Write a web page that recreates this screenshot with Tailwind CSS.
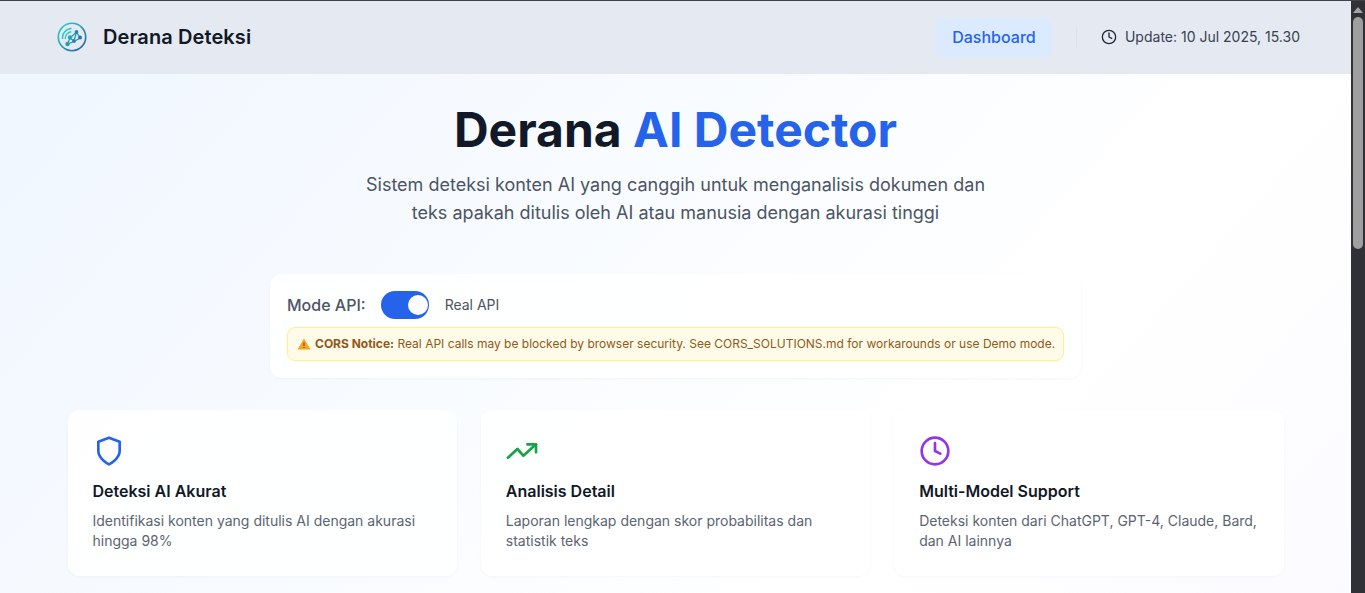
<!DOCTYPE html>
<html lang="id">
<head>
  <meta charset="UTF-8" />
  <meta name="viewport" content="width=device-width, initial-scale=1.0" />
  <title>Derana AI Detector</title>
  <script src="https://cdn.jsdelivr.net/npm/@tailwindcss/browser@4"></script>
</head>
<body class="h-screen overflow-hidden flex font-['Inter',sans-serif] text-gray-900">
  <div class="flex-1 min-w-0 h-full overflow-hidden">
    <div class="min-h-[1520px] flex flex-col bg-gradient-to-br from-[#eff6ff] via-white to-[#f5f3ff]">
      <!-- header -->
      <header class="shrink-0 h-[74px] border-t border-[#3f4248] pb-[1px] bg-[#e5e9f1] flex items-center justify-between pl-[57px] pr-[51px]">
        <div class="flex items-center gap-4">
          <svg class="w-[30px] h-[30px]" viewBox="0 0 30 30" fill="none">
            <defs>
              <linearGradient id="logoGrad" x1="3" y1="3" x2="27" y2="27" gradientUnits="userSpaceOnUse">
                <stop offset="0" stop-color="#22d3c5" />
                <stop offset="1" stop-color="#2563a8" />
              </linearGradient>
            </defs>
            <circle cx="15" cy="15" r="13.7" stroke="url(#logoGrad)" stroke-width="1.600" />
            <path d="M5.500 17a9.500 9.500 0 0 1 9-10.500M8.300 17a6.800 6.800 0 0 1 6-7.300" stroke="#2ccac6" stroke-width="1.400" />
            <path d="M10.500 22l2.500-6 6.500-6 3.500 6-5 3-7 3M13 16l4 3M19.500 10l-2.500 9" stroke="#1f98b2" stroke-width="1.200" />
            <circle cx="10.500" cy="22" r="2.200" fill="#1f9fb5" />
            <circle cx="13" cy="15.500" r="2.200" fill="#22a9bb" />
            <circle cx="19.500" cy="10" r="1.900" fill="#2088ad" />
            <circle cx="17" cy="19" r="1.900" fill="#2088ad" />
            <circle cx="23" cy="15.500" r="2" fill="#2378a6" />
          </svg>
          <span class="text-xl tracking-[0.1px] font-semibold text-[#111827]">Derana Deteksi</span>
        </div>
        <div class="flex items-center">
          <a class="h-[39px] w-[116px] flex items-center justify-center rounded-lg bg-[#dbeafe] text-[#2563eb] font-medium">Dashboard</a>
          <span class="w-px h-5 bg-[#e0e1e4] ml-6 mr-6"></span>
          <svg class="w-4 h-4 text-[#1f2937]" viewBox="0 0 24 24" fill="none" stroke="currentColor" stroke-width="2" stroke-linecap="round" stroke-linejoin="round">
            <circle cx="12" cy="12" r="10" />
            <path d="M12 6v6l4 2" />
          </svg>
          <span class="ml-2 text-sm text-[#374151]">Update: 10 Jul 2025, 15.30</span>
        </div>
      </header>

      <main class="mx-auto w-[1216px]">
        <!-- hero -->
        <section class="text-center pt-6">
          <h1 class="text-5xl leading-[64px] font-bold text-[#111827]">Derana <span class="text-[#2563eb]">AI Detector</span></h1>
          <p class="mt-[9px] mx-auto max-w-[640px] text-lg leading-7 text-[#4b5563]">Sistem deteksi konten AI yang canggih untuk menganalisis dokumen dan teks apakah ditulis oleh AI atau manusia dengan akurasi tinggi</p>
        </section>

        <!-- mode api -->
        <section class="mt-[47px] mx-auto w-[811px] h-[104px] rounded-xl bg-white/90 shadow-[0_1px_3px_rgba(0,0,0,0.04)] px-[17px] pt-[17px]">
          <div class="flex items-center h-7">
            <span class="font-medium text-[#4b5563]">Mode API:</span>
            <span class="ml-[15px] relative w-12 h-7 rounded-full bg-[#2563eb]">
              <span class="absolute right-px top-1 w-5 h-5 rounded-full bg-white"></span>
            </span>
            <span class="ml-4 text-sm text-[#4b5563]">Real API</span>
          </div>
          <div class="mt-2 h-[34px] w-[777px] rounded-lg border border-[#fef08a] bg-[#fefce8] flex items-center pl-[9px] text-xs text-[#92571a] whitespace-nowrap">
            <span class="mr-1">
              <svg class="w-3.5 h-3.5" viewBox="0 0 14 14"><path d="M7 1.500L13.500 12.500H.5z" fill="#f5a524" /><path d="M7 5.500v3.500M7 10v1" stroke="#7c4a0a" stroke-width="1.100" /></svg>
            </span>
            <span><strong class="font-bold">CORS Notice:</strong> Real API calls may be blocked by browser security. See CORS_SOLUTIONS.md for workarounds or use Demo mode.</span>
          </div>
        </section>

        <!-- fitur -->
        <section class="mt-8 grid grid-cols-3 gap-6">
          <div class="h-[166px] rounded-xl bg-white/90 shadow-[0_1px_3px_rgba(0,0,0,0.04)] pt-[25px] pl-[25px]">
            <svg class="w-8 h-8 text-[#2563eb]" viewBox="0 0 24 24" fill="none" stroke="currentColor" stroke-width="2" stroke-linecap="round" stroke-linejoin="round">
              <path d="M12 22s8-4 8-10V5l-8-3-8 3v7c0 6 8 10 8 10z" />
            </svg>
            <h3 class="mt-2.5 text-base leading-7 font-semibold text-[#111827]">Deteksi AI Akurat</h3>
            <p class="mt-1.5 w-[340px] text-sm leading-5 text-[#5b6472]">Identifikasi konten yang ditulis AI dengan akurasi hingga 98%</p>
          </div>
          <div class="h-[166px] rounded-xl bg-white/90 shadow-[0_1px_3px_rgba(0,0,0,0.04)] pt-[25px] pl-[25px]">
            <svg class="w-8 h-8 text-[#16a34a]" viewBox="0 0 24 24" fill="none" stroke="currentColor" stroke-width="2" stroke-linecap="round" stroke-linejoin="round">
              <path d="M1.500 17l7-6.500 4.500 5 9.500-8.500" />
              <path d="M16 7h6.500v6" />
            </svg>
            <h3 class="mt-2.5 text-base leading-7 font-semibold text-[#111827]">Analisis Detail</h3>
            <p class="mt-1.5 w-[340px] text-sm leading-5 text-[#5b6472]">Laporan lengkap dengan skor probabilitas dan statistik teks</p>
          </div>
          <div class="h-[166px] rounded-xl bg-white/90 shadow-[0_1px_3px_rgba(0,0,0,0.04)] pt-[25px] pl-[25px]">
            <svg class="w-8 h-8 text-[#9333ea]" viewBox="0 0 24 24" fill="none" stroke="currentColor" stroke-width="2" stroke-linecap="round" stroke-linejoin="round">
              <circle cx="12" cy="12" r="10" />
              <path d="M12 6v6l4 2" />
            </svg>
            <h3 class="mt-2.5 text-base leading-7 font-semibold text-[#111827]">Multi-Model Support</h3>
            <p class="mt-1.5 w-[340px] text-sm leading-5 text-[#5b6472]">Deteksi konten dari ChatGPT, GPT-4, Claude, Bard, dan AI lainnya</p>
          </div>
        </section>
      </main>
    </div>
  </div>

  <!-- scrollbar -->
  <div class="shrink-0 w-[14px] h-full bg-[#2f3136] flex flex-col items-center border-t border-[#3f4248]">
    <svg class="mt-[6px] w-[10px] h-[6px]" viewBox="0 0 10 6"><path d="M5 0l5 6H0z" fill="#a3a3a3" /></svg>
    <div class="mt-[4px] w-[10px] h-[232px] rounded-full bg-[#9f9f9f]"></div>
  </div>
</body>
</html>
